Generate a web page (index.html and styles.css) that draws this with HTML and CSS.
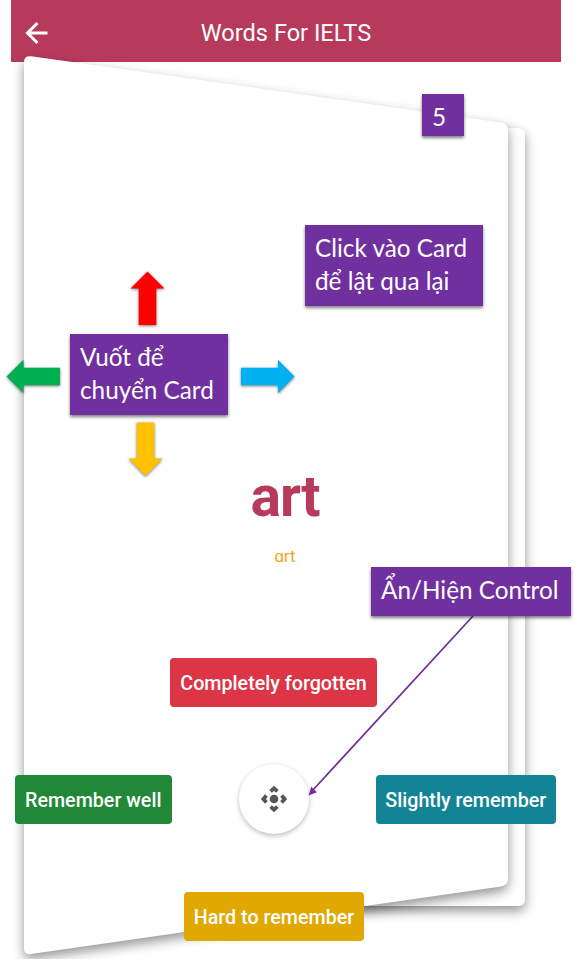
FILE: index.html
```html
<!DOCTYPE html>
<html lang="vi">
<head>
<meta charset="utf-8">
<title>Words For IELTS</title>
<link rel="stylesheet" href="styles.css">
</head>
<body>
<div class="app">
  <header class="bar">
    <svg class="back" width="24" height="24" viewBox="0 0 24 24"><path d="M12.5 2 2.500 12l10 10M3 12h19.500" fill="none" stroke="#fff" stroke-width="3"/></svg>
    <h1>Words For IELTS</h1>
  </header>
  <main class="stage">
    <section class="word">
      <h2>art</h2>
      <p>ɑrt</p>
    </section>
    <section class="controls">
      <button class="btn red">Completely forgotten</button>
      <div class="row">
        <button class="btn green">Remember well</button>
        <button class="knob"><svg width="28" height="28" viewBox="-14 -14 28 28"><circle r="4.3" fill="#555"/><g fill="none" stroke="#555" stroke-width="3.8"><path d="M-3.400-7.600 0-10.600 3.400-7.600"/><path d="M-3.400 7.600 0 10.600 3.400 7.600"/><path d="M-7.600-3.400-10.600 0-7.600 3.400"/><path d="M7.600-3.400 10.600 0 7.600 3.400"/></g></svg></button>
        <button class="btn teal">Slightly remember</button>
      </div>
      <button class="btn amber">Hard to remember</button>
    </section>
  </main>
</div>
<svg class="cards" width="577" height="959" viewBox="0 0 577 959">
  <rect class="sheet" x="60" y="128" width="465" height="778" rx="6"/>
  <path class="sheet" d="M24 62Q24 55.5 31 56.2L501 122.5Q508 123.500 508 130V879Q508 885 501 886.500L31 954Q24 955 24 948Z"/>
</svg>
<svg class="marks" width="577" height="959" viewBox="0 0 577 959">
  <g class="arrows">
    <path fill="#f00" d="M147.500 271.500 164.500 288.500H156.300V325H138.700V288.500H130.500Z"/>
    <path fill="#00b050" d="M6.500 376.500 23.500 359.800V367.700H60V385.300H23.500V393.200Z"/>
    <path fill="#00b0f0" d="M294.500 376.500 278 359.800V367.700H241V385.300H278V393.200Z"/>
    <path fill="#ffc000" d="M145.500 476 162.500 458.500H154.300V422.500H136.700V458.500H128.500Z"/>
  </g>
  <path d="M473 616 312 791" stroke="#7030a0" stroke-width="1.8"/>
  <path d="M308.500 795.500 311.300 786.800 317 792.200Z" fill="#7030a0"/>
</svg>
<div class="note count">5</div>
<div class="note flip">Click vào Card<br>để lật qua lại</div>
<div class="note swipe">Vuốt để<br>chuyển Card</div>
<div class="note toggle">Ẩn/Hiện Control</div>
</body>
</html>
```

FILE: styles.css
```css
* { box-sizing: border-box; }
body { margin: 0; background: #fff; width: 577px; height: 959px; overflow: hidden; position: relative; font-family: Roboto, sans-serif; }
.app { width: 550px; height: 959px; margin-left: 11px; display: flex; flex-direction: column; }
.bar { height: 61.5px; flex: none; background: #b83a5b; display: grid; grid-template-columns: 52px 1fr 52px; align-items: center; padding-top: 4px; }
.back { margin-left: 14px; }
.bar h1 { margin: 0; color: #fff; font-size: 23.5px; line-height: 30px; font-weight: 400; text-align: center; letter-spacing: .03px; white-space: nowrap; }
.stage { position: relative; z-index: 2; flex: 1; display: flex; flex-direction: column; padding-top: 402px; }
.word { width: 548px; text-align: center; height: 194.500px; flex: none; }
.word h2 { margin: 0; color: #b83a5b; font-size: 57px; line-height: 66px; font-weight: 700; letter-spacing: -1px; }
.word p { margin: 15px 0 0; color: #f5a31d; font-size: 17px; line-height: 22px; }
.controls { display: flex; flex-direction: column; width: 541px; margin-left: 4px; }
.btn { border: 0; border-radius: 4px; height: 49px; padding: 3px 0 0; color: #fff; font: 500 19.700px/24px Roboto, sans-serif; white-space: nowrap; }
.red { background: #dc3545; width: 207px; margin-left: 155px; }
.green { background: #218838; width: 156.500px; justify-self: start; }
.teal { background: #138496; width: 180.500px; justify-self: end; }
.amber { background: #e0a800; width: 180px; margin-left: 169px; }
.row { display: grid; grid-template-columns: 157px 1fr 181px; align-items: center; justify-items: center; height: 70px; margin: 57px 0 58px; }
.knob { width: 70px; height: 70px; border: 0; padding: 0; border-radius: 50%; background: #fff; box-shadow: 0 2px 5px rgba(0,0,0,.26); display: flex; align-items: center; justify-content: center; }
.cards { position: absolute; left: 0; top: 0; z-index: 1; }
.sheet { fill: #fff; filter: drop-shadow(0 5px 6px rgba(0,0,0,.42)); }
.marks { position: absolute; left: 0; top: 0; z-index: 3; }
.arrows path { filter: drop-shadow(0 1.5px 1.5px rgba(0,0,0,.5)); }
.note { position: absolute; z-index: 4; background: #7030a0; color: #fff; font: 400 24.300px/33px Lato, "Noto Sans", sans-serif; padding: 6px 10px; white-space: nowrap; box-shadow: 0 2px 3px rgba(0,0,0,.5); }
.count { left: 422px; top: 94px; width: 42px; height: 42px; }
.flip { left: 305px; top: 225px; width: 178px; height: 81px; }
.swipe { left: 70px; top: 334px; width: 158px; height: 81px; }
.toggle { left: 371px; top: 567px; width: 200px; height: 49px; }
```
